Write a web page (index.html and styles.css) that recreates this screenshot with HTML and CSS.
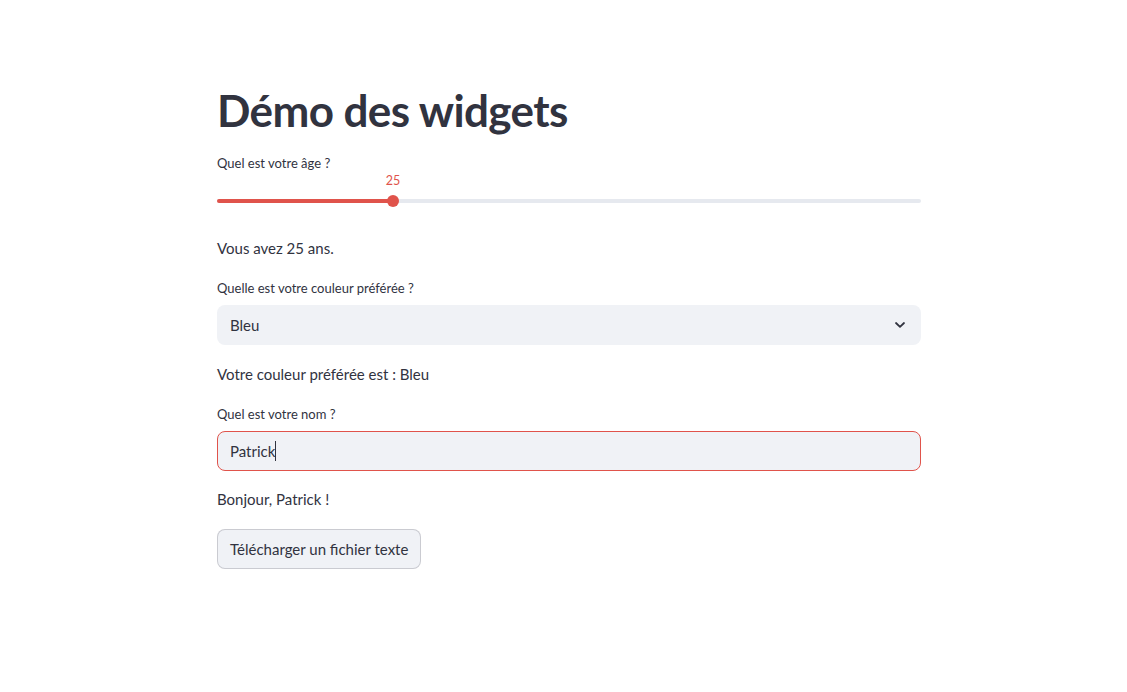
FILE: index.html
```html
<!DOCTYPE html>
<html lang="fr">
<head>
<meta charset="utf-8">
<title>Démo des widgets</title>
<link rel="stylesheet" href="styles.css">
</head>
<body>
<main class="main">
  <h1 class="title">Démo des widgets</h1>

  <div class="widget">
    <div class="label">Quel est votre âge ?</div>
    <div class="slider">
      <div class="slider-value" style="left:25%">25</div>
      <div class="track">
        <div class="track-fill" style="width:25%"></div>
        <div class="thumb" style="left:25%"></div>
      </div>
    </div>
  </div>

  <p class="text t1">Vous avez 25 ans.</p>

  <div class="widget">
    <div class="label">Quelle est votre couleur préférée ?</div>
    <div class="select">
      <span>Bleu</span>
      <svg class="chev" width="12" height="8" viewBox="0 0 12 8"><path d="M2 2 L6 5.8 L10 2" fill="none" stroke="#31333f" stroke-width="1.8" stroke-linecap="round" stroke-linejoin="round"/></svg>
    </div>
  </div>

  <p class="text t2">Votre couleur préférée est : Bleu</p>

  <div class="widget">
    <div class="label">Quel est votre nom ?</div>
    <div class="input"><span>Patrick</span><span class="caret"></span></div>
  </div>

  <p class="text t3">Bonjour, Patrick !</p>

  <button class="button">Télécharger un fichier texte</button>
</main>
</body>
</html>
```

FILE: styles.css
```css
* { box-sizing: border-box; }
html, body { margin: 0; padding: 0; background: #ffffff; }
body {
  font-family: "Lato", "Noto Sans", sans-serif;
  color: #31333f;
}
.main {
  width: 704px;
  margin-left: 217px;
  padding-top: 84px;
  display: flex;
  flex-direction: column;
  align-items: flex-start;
}
.title {
  margin: 0;
  font-size: 44px;
  line-height: 52px;
  height: 52px;
  font-weight: 700;
  letter-spacing: -0.6px;
}
.widget { width: 100%; display: flex; flex-direction: column; }
.label {
  font-size: 13px;
  line-height: 20px;
  height: 20px;
}
.title + .widget { margin-top: 17px; }
.slider {
  position: relative;
  height: 37px;
}
.slider-value {
  position: absolute;
  top: 0;
  transform: translateX(-50%);
  font-size: 12.5px;
  line-height: 16px;
  color: #e0534b;
}
.track {
  position: absolute;
  left: 0; right: 0;
  top: 26px;
  height: 4px;
  border-radius: 2px;
  background: #e6e9ef;
}
.track-fill {
  height: 100%;
  background: #e0534b;
  border-radius: 2px;
}
.thumb {
  position: absolute;
  top: -4px;
  width: 12px; height: 12px;
  margin-left: -6px;
  border-radius: 50%;
  background: #e0534b;
}
.text {
  margin: 0;
  font-size: 15px;
  line-height: 24px;
}
.t1 { margin-top: 26px; margin-bottom: 18px; }
.t2 { margin-top: 17px; margin-bottom: 18px; }
.t3 { margin-top: 16px; margin-bottom: 18px; }
.label + .select, .label + .input { margin-top: 7px; }
.select {
  height: 40px;
  background: #f0f2f6;
  border-radius: 8px;
  display: flex;
  align-items: center;
  justify-content: space-between;
  padding: 0 15px 0 13px;
  font-size: 15px;
}
.chev { display: block; }
.input {
  height: 40px;
  background: #f0f2f6;
  border: 1px solid #e0534b;
  border-radius: 8px;
  display: flex;
  align-items: center;
  padding: 0 12px;
  font-size: 15px;
}
.caret {
  display: inline-block;
  width: 1px;
  height: 20px;
  background: #31333f;
}
.button {
  height: 40px;
  padding: 0 12px;
  font-family: inherit;
  font-size: 15px;
  color: #31333f;
  background: #f0f2f6;
  border: 1px solid rgba(49, 51, 63, 0.2);
  border-radius: 8px;
}
```
